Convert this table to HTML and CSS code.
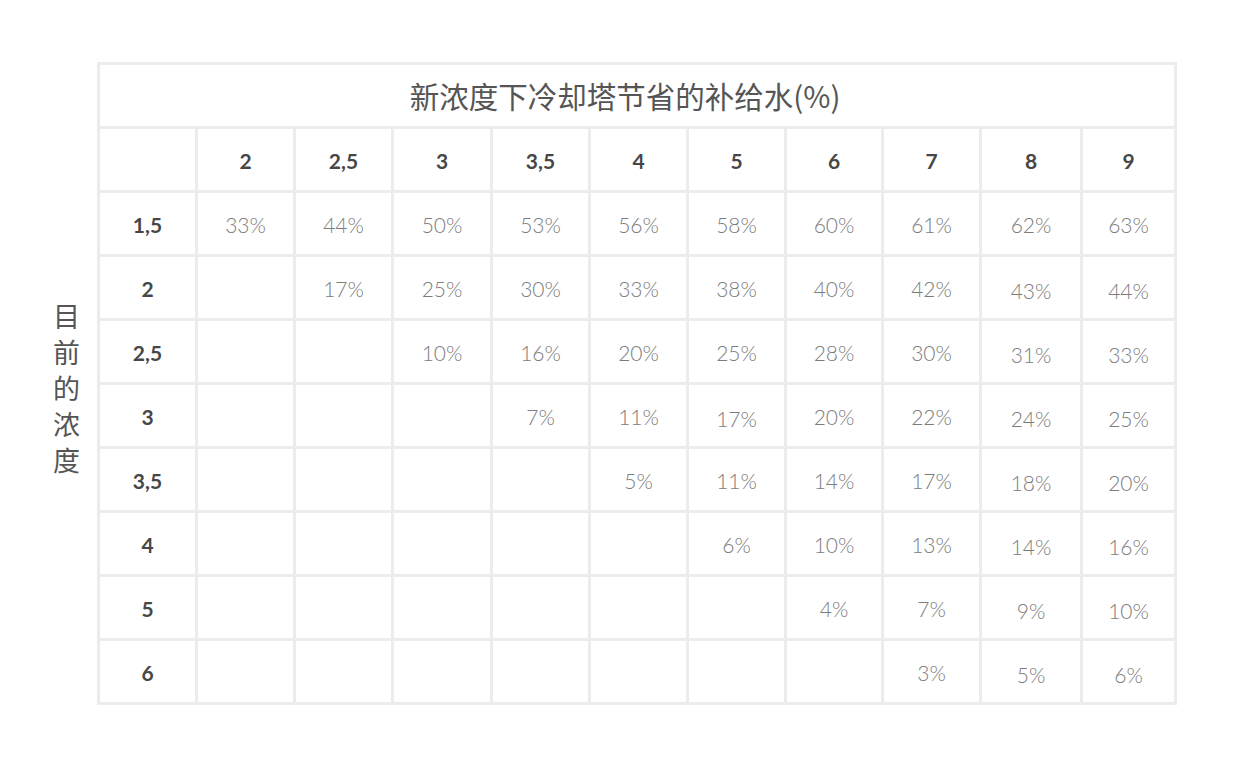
FILE: index.html
```html
<!DOCTYPE html>
<html lang="zh">
<head>
<meta charset="utf-8">
<link rel="stylesheet" href="styles.css">
</head>
<body>
<div class="page">
  <div class="side"><div class="side-label">目前的浓度</div></div>
  <table class="grid">
    <colgroup>
      <col class="c98"><col class="c98"><col class="c98"><col class="c99"><col class="c98"><col class="c98"><col class="c98"><col class="c97"><col class="c98"><col class="c101"><col class="c94">
    </colgroup>
    <tr><td class="title" colspan="11">新浓度下冷却塔节省的补给水(%)</td></tr>
    <tr class="head"><td></td><td>2</td><td>2,5</td><td>3</td><td>3,5</td><td>4</td><td>5</td><td>6</td><td>7</td><td>8</td><td>9</td></tr>
    <tr><th>1,5</th><td>33%</td><td>44%</td><td>50%</td><td>53%</td><td>56%</td><td>58%</td><td>60%</td><td>61%</td><td>62%</td><td>63%</td></tr>
    <tr><th>2</th><td></td><td>17%</td><td>25%</td><td>30%</td><td>33%</td><td>38%</td><td>40%</td><td>42%</td><td class="low">43%</td><td class="low">44%</td></tr>
    <tr><th>2,5</th><td></td><td></td><td>10%</td><td>16%</td><td>20%</td><td>25%</td><td>28%</td><td>30%</td><td class="low">31%</td><td class="low">33%</td></tr>
    <tr><th>3</th><td></td><td></td><td></td><td>7%</td><td>11%</td><td class="low">17%</td><td>20%</td><td>22%</td><td class="low">24%</td><td class="low">25%</td></tr>
    <tr><th>3,5</th><td></td><td></td><td></td><td></td><td>5%</td><td>11%</td><td>14%</td><td>17%</td><td class="low">18%</td><td class="low">20%</td></tr>
    <tr><th>4</th><td></td><td></td><td></td><td></td><td></td><td>6%</td><td>10%</td><td>13%</td><td class="low">14%</td><td class="low">16%</td></tr>
    <tr><th>5</th><td></td><td></td><td></td><td></td><td></td><td></td><td>4%</td><td>7%</td><td class="low">9%</td><td class="low">10%</td></tr>
    <tr><th>6</th><td></td><td></td><td></td><td></td><td></td><td></td><td></td><td>3%</td><td class="low">5%</td><td class="low">6%</td></tr>
  </table>
</div>
</body>
</html>
```
FILE: styles.css
```css
html, body {
  margin: 0;
  padding: 0;
  background: #ffffff;
}
body {
  font-family: Lato, "Noto Sans CJK SC", sans-serif;
  width: 1240px;
  height: 776px;
  overflow: hidden;
}
.page {
  display: flex;
  padding-top: 62px;
}
.side {
  width: 97px;
  display: flex;
  align-items: center;
  padding-top: 8px;
  box-sizing: border-box;
  padding-left: 53px;
}
.side-label {
  width: 28px;
  font-family: "Noto Sans CJK SC", sans-serif;
  font-size: 27px;
  line-height: 36px;
  color: #555555;
  word-break: break-all;
}
.grid {
  border-collapse: collapse;
  table-layout: fixed;
  width: 1079px;
}
.c98 { width: 98px; }
.c99 { width: 99px; }
.c97 { width: 97px; }
.c101 { width: 101px; }
.c94 { width: 94px; }
.grid tr {
  height: 64px;
}
.grid td, .grid th {
  border: 3px solid #ececec;
  padding: 2px 0 0 0;
  text-align: center;
  vertical-align: middle;
}
.grid td {
  font-size: 21px;
  font-weight: 300;
  color: #7c7c7c;
}
.grid th, .grid .head td {
  font-size: 21px;
  font-weight: 700;
  color: #474747;
}
.grid td.title {
  font-family: "Noto Sans CJK SC", sans-serif;
  font-size: 29.5px;
  font-weight: 400;
  color: #555555;
  padding: 0 24px 2px 0;
}
.grid td.low {
  padding-top: 6px;
}
```
